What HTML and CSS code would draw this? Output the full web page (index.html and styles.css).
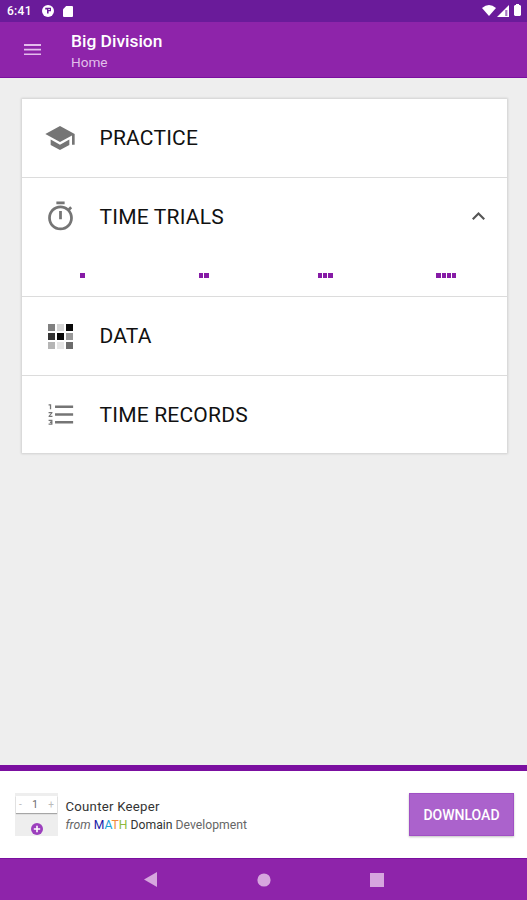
FILE: index.html
```html
<!DOCTYPE html>
<html lang="en">

<head>
  <meta charset="UTF-8" />
  <meta name="viewport" content="width=device-width, initial-scale=1.0" />
  <link rel="stylesheet" href="styles.css">
  <title>Big Division</title>
</head>

<body>
  <!-- status bar -->
  <div class="status">
    <span class="clock">6:41</span>
    <svg class="status-app" viewBox="0 0 12 12">
      <circle cx="6" cy="6" r="6" fill="#fff" />
      <path d="M3.2 2.8H9v3.4H6.6V8.6H5V4.4H3.2z" fill="#6a1b9a" />
      <path d="M6.4 4h1.4v1H6.4z" fill="#fff" />
    </svg>
    <svg class="status-card" viewBox="0 0 10 11">
      <path d="M3.2 0H9q1 0 1 1v9q0 1-1 1H1q-1 0-1-1V3.2z" fill="#fff" />
    </svg>
    <svg class="status-wifi" viewBox="0 0 14 11">
      <path d="M0 3Q7-3 14 3L7 11z" fill="#fff" />
    </svg>
    <svg class="status-signal" viewBox="0 0 12 12">
      <path d="M12 0v12H0z" fill="#fff" />
      <path d="M8.2 5h2.2v6H8.2z" fill="#a678c2" />
    </svg>
    <svg class="status-battery" viewBox="0 0 7 12">
      <path d="M2 0h3v1h1l1 1v9l-1 1H1l-1-1V2l1-1h1z" fill="#fff" />
    </svg>
  </div>

  <header class="toolbar">
    <svg class="menu-icon" viewBox="0 0 18 12">
      <path d="M0 0h18v2H0zM0 5h18v2H0zM0 10h18v2H0z" />
    </svg>
    <div class="heading">
      <h1>Big Division</h1>
      <p class="subtitle">Home</p>
    </div>
  </header>

  <main>
    <div class="card">
      <div class="row">
        <div class="icon">
          <svg class="icon-practice" viewBox="0 0 24 24">
            <path d="M5 13.18v4L12 21l7-3.82v-4L12 17l-7-3.82zM12 3L1 9l11 6 9-4.91V17h2V9L12 3z" />
          </svg>
        </div>
        <span>PRACTICE</span>
      </div>

      <div class="trials">
        <div class="row">
          <div class="icon">
            <svg class="icon-timer" viewBox="0 0 24 24">
              <path d="M15 1H9v2h6V1zm-4 13h2V8h-2v6zm8.03-6.61l1.42-1.42c-.43-.51-.9-.99-1.41-1.41l-1.42 1.42C16.07 4.74 14.12 4 12 4c-4.97 0-9 4.03-9 9s4.02 9 9 9 9-4.03 9-9c0-2.12-.74-4.07-1.97-5.61zM12 20c-3.87 0-7-3.13-7-7s3.13-7 7-7 7 3.13 7 7-3.13 7-7 7z" />
            </svg>
          </div>
          <span>TIME TRIALS</span>
          <svg class="chevron" viewBox="0 0 12 8">
            <path d="M6 0L0 6l1.4 1.4L6 2.8l4.6 4.6L12 6z" />
          </svg>
        </div>
        <!-- number of digits -->
        <div class="digits">
          <div class="digit"><i></i></div>
          <div class="digit"><i></i><i></i></div>
          <div class="digit"><i></i><i></i><i></i></div>
          <div class="digit"><i></i><i></i><i></i><i></i></div>
        </div>
      </div>

      <div class="row">
        <div class="icon">
          <div class="squares">
            <b class="mid"></b><b class="light"></b><b class="black"></b>
            <b class="dark"></b><b class="black"></b><b class="gray"></b>
            <b class="silver"></b><b class="pale"></b><b class="dim"></b>
          </div>
        </div>
        <span>DATA</span>
      </div>

      <div class="row">
        <div class="icon">
          <svg class="icon-list" viewBox="0 0 24 24">
            <path d="M2 17h2v.5H3v1h1v.5H2v1h3v-4H2v1zm1-9h1V4H2v1h1v3zm-1 3h1.8L2 13.1v.9h3v-1H3.2L5 10.9V10H2v1zm5-6v2h14V5H7zm0 14h14v-2H7v2zm0-6h14v-2H7v2z" />
          </svg>
        </div>
        <span>TIME RECORDS</span>
      </div>
    </div>
  </main>

  <!-- ad banner -->
  <div class="banner">
    <div class="thumb">
      <div class="counter"><span>-</span><span class="count">1</span><span>+</span></div>
      <svg class="add" viewBox="0 0 12 12">
        <circle cx="6" cy="6" r="6" fill="#9c3fbd" />
        <path d="M5.2 2.8h1.6v2.4h2.4v1.6H6.8v2.4H5.2V6.8H2.8V5.2h2.4z" fill="#fff" />
      </svg>
    </div>
    <div class="promo">
      <p class="promo-title">Counter Keeper</p>
      <p class="promo-from"><em>from</em> <span class="m">M</span><span class="a">A</span><span class="t">T</span><span class="h">H</span> <span class="domain">Domain</span> Development</p>
    </div>
    <button class="download">DOWNLOAD</button>
  </div>

  <nav class="navbar">
    <svg class="nav-back" viewBox="0 0 13 15"><path d="M13 0v15L0 7.5z" /></svg>
    <svg class="nav-home" viewBox="0 0 14 14"><circle cx="7" cy="7" r="6.6" /></svg>
    <svg class="nav-recent" viewBox="0 0 14 14"><path d="M0 0h14v14H0z" /></svg>
  </nav>
</body>

</html>
```
FILE: styles.css
```css
:root {
  --primary: #8e24aa;
  --primary-dark: #6a1b9a;
  --accent: #7b0fa0;
}

* {
  box-sizing: border-box;
}

body {
  background-color: #eeeeee;
  font-family: Roboto, sans-serif;
  display: flex;
  flex-direction: column;
  height: 900px;
  margin: 0;
  overflow: hidden;
}

h1,
p {
  margin: 0;
}

svg {
  display: block;
  flex: none;
}

/* status bar */
.status {
  background-color: var(--primary-dark);
  color: #fff;
  display: flex;
  align-items: center;
  height: 22px;
  padding: 0 5px 0 7px;
}

.clock {
  font-size: 12px;
  font-weight: 500;
  letter-spacing: 0.3px;
  width: 35px;
}

.status-app {
  width: 12px;
}

.status-card {
  width: 10px;
  margin-left: 9px;
}

.status-wifi {
  width: 14px;
  margin: 0 1px 2px auto;
}

.status-signal {
  width: 12px;
  margin-bottom: 1px;
}

.status-battery {
  width: 7px;
  margin: 0 1px 2px 5px;
}

/* toolbar */
.toolbar {
  background-color: var(--primary);
  border-bottom: 1px solid var(--accent);
  color: #fff;
  display: flex;
  align-items: center;
  height: 56px;
  padding: 0 23.5px;
}

.menu-icon {
  width: 17px;
  fill: #e3bdec;
  margin-right: 30.5px;
}

.heading {
  padding-top: 3px;
}

h1 {
  font-size: 17.4px;
  font-weight: 500;
  line-height: 22px;
}

.subtitle {
  color: #e2bfea;
  font-size: 13.6px;
  line-height: 20px;
}

/* card */
main {
  flex: 1;
  padding: 21px 20px 0 22px;
}

.card {
  background-color: #fff;
  box-shadow: 0 0 2px 1px rgba(0, 0, 0, 0.12);
  height: 354px;
}

.card > div + div {
  border-top: 1.5px solid #dcdcdc;
}

.row {
  display: flex;
  align-items: center;
  color: #111;
  font-size: 21px;
  letter-spacing: 0.2px;
  height: 78px;
  padding: 0 22px;
}

.card > .row + .row,
.trials + .row {
  height: 79px;
}

.icon {
  display: flex;
  align-items: center;
  justify-content: center;
  width: 33px;
  margin-right: 22.5px;
}

.icon svg {
  fill: #757575;
}

.icon-practice {
  width: 32px;
  margin: 0 1px 1px 0;
}

.icon-timer {
  width: 33px;
  margin: 0 1px 2px 0;
}

.icon-list {
  width: 31px;
  margin: 0 0 1px 1px;
}

.trials {
  height: 119px;
}

.chevron {
  width: 13px;
  fill: #555;
  margin: 0 0 2px auto;
}

.digits {
  display: grid;
  grid-template-columns: repeat(4, 1fr);
  padding-top: 17px;
}

.digit {
  display: flex;
  justify-content: center;
  gap: 1px;
}

.digit i {
  background-color: #861ba6;
  width: 4.3px;
  height: 4.5px;
}

.squares {
  display: grid;
  grid-template-columns: repeat(3, 7px);
  grid-auto-rows: 7px;
  gap: 2px;
}

.mid { background-color: #808080; }
.light { background-color: #d5d5d5; }
.black { background-color: #080808; }
.dark { background-color: #353535; }
.gray { background-color: #999; }
.silver { background-color: #b5b5b5; }
.pale { background-color: #e5e5e5; }
.dim { background-color: #6c6c6c; }

/* ad banner */
.banner {
  background-color: #fff;
  border-top: 6px solid var(--accent);
  display: flex;
  align-items: center;
  height: 93px;
  padding: 0 13px 0 15px;
}

.thumb {
  background-color: #eee;
  display: flex;
  flex-direction: column;
  align-items: center;
  width: 43px;
  height: 43px;
  padding: 3px 1px 0;
}

.counter {
  background-color: #fff;
  box-shadow: 0 1px 1px rgba(0, 0, 0, 0.3);
  color: #bbb;
  display: flex;
  align-items: center;
  justify-content: space-between;
  font-size: 10px;
  width: 41px;
  height: 17px;
  padding: 0 3px;
}

.count {
  color: #666;
}

.add {
  width: 12px;
  margin-top: 10px;
}

.promo {
  color: #333;
  margin-left: 7.5px;
  padding-top: 3px;
}

.promo-title {
  font-size: 13.2px;
  letter-spacing: 0.25px;
  line-height: 18px;
}

.promo-from {
  color: #666;
  font-size: 12.2px;
  line-height: 19px;
}

.m { color: #1a1aa8; }
.a { color: #1ba0d8; }
.t { color: #f08a3c; }
.h { color: #8dbb3c; }
.domain { color: #333; }

.download {
  background-color: #ab62cc;
  border: 1px solid #a050c4;
  box-shadow: 0 1px 2px rgba(0, 0, 0, 0.25);
  color: #fff;
  font-family: inherit;
  font-size: 14px;
  font-weight: 500;
  width: 105px;
  height: 43px;
  margin-left: auto;
  padding: 1px 0 0;
}

/* system navigation */
.navbar {
  background-color: var(--primary);
  border-top: 1px solid var(--accent);
  display: flex;
  align-items: center;
  height: 42px;
  padding-left: 144px;
}

.navbar svg {
  fill: #d6a6de;
}

.nav-back {
  width: 13px;
}

.nav-home {
  width: 14px;
  margin-left: 100px;
}

.nav-recent {
  width: 14px;
  margin-left: 99px;
}
```
